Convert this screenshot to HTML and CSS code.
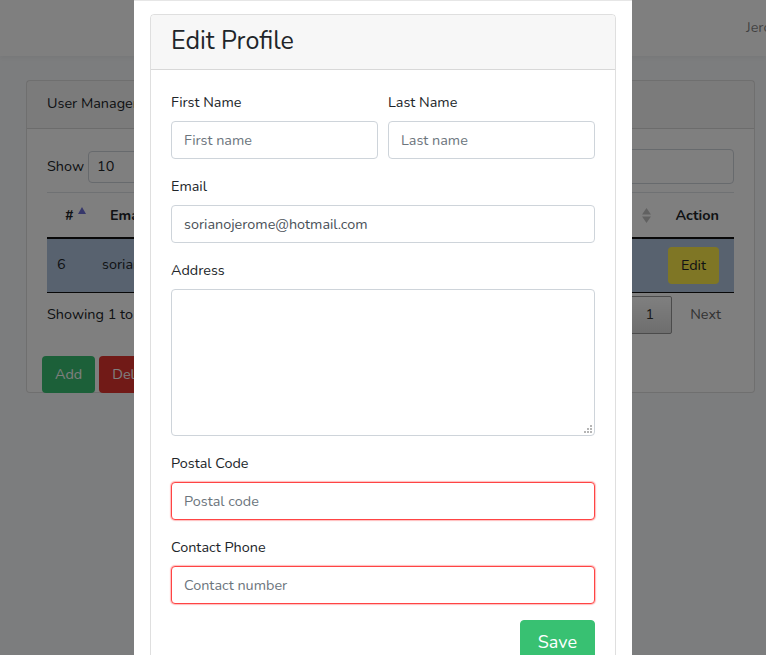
FILE: index.html
```html
<!DOCTYPE html>
<html lang="en">
<head>
<meta charset="utf-8">
<title>User Management</title>
<link rel="stylesheet" href="styles.css">
</head>
<body>
<nav class="navbar">
  <span class="nav-user">Jerome Soriano</span>
</nav>
<main class="main">
  <section class="card">
    <div class="card-header">User Management</div>
    <div class="card-body">
      <div class="tools">
        <label class="show">Show <span class="select">10</span> entries</label>
        <label class="search">Search: <span class="search-input"></span></label>
      </div>
      <table class="table">
        <thead>
          <tr>
            <th class="c-id">#<span class="sort-up"></span></th>
            <th class="c-email">Email</th>
            <th class="c-name">Name</th>
            <th class="c-sort">
              <svg class="sort-both" width="9" height="15" viewBox="0 0 9 15" aria-hidden="true">
                <polygon points="4.5,0 9,6.5 0,6.5" fill="#c2c2c2"/>
                <polygon points="0,8.5 9,8.5 4.5,15" fill="#c2c2c2"/>
              </svg>
            </th>
            <th class="c-action">Action</th>
          </tr>
        </thead>
        <tbody>
          <tr class="selected">
            <td class="c-id">6</td>
            <td class="c-email">sorianojerome@hotmail.com</td>
            <td class="c-name">Jerome Soriano</td>
            <td class="c-sort"></td>
            <td class="c-action"><span class="btn btn-warning">Edit</span></td>
          </tr>
        </tbody>
      </table>
      <div class="table-foot">
        <span class="info">Showing 1 to 1 of 1 entries</span>
        <div class="paging">
          <span class="page-link disabled">Previous</span>
          <span class="page-link current">1</span>
          <span class="page-link disabled">Next</span>
        </div>
      </div>
    </div>
    <div class="card-actions">
      <span class="btn btn-success">Add</span>
      <span class="btn btn-danger">Delete</span>
    </div>
  </section>
</main>

<div class="backdrop">
  <div class="modal">
    <div class="modal-body">
      <div class="ecard">
        <div class="ecard-header">Edit Profile</div>
        <form class="ecard-body">
          <div class="form-row">
            <div class="form-group">
              <label class="label">First Name</label>
              <input class="input" type="text" placeholder="First name">
            </div>
            <div class="form-group">
              <label class="label">Last Name</label>
              <input class="input" type="text" placeholder="Last name">
            </div>
          </div>
          <div class="form-group">
            <label class="label">Email</label>
            <input class="input" type="text" value="sorianojerome@hotmail.com">
          </div>
          <div class="form-group">
            <label class="label">Address</label>
            <div class="textarea-wrap">
              <textarea class="input textarea" rows="6"></textarea>
              <svg class="grip" width="9" height="9" viewBox="0 0 9 9" aria-hidden="true">
                <rect x="6" y="0" width="2" height="2" fill="#b5b5b5"/>
                <rect x="3" y="3" width="2" height="2" fill="#b5b5b5"/>
                <rect x="6" y="3" width="2" height="2" fill="#b5b5b5"/>
                <rect x="0" y="6" width="2" height="2" fill="#b5b5b5"/>
                <rect x="3" y="6" width="2" height="2" fill="#b5b5b5"/>
                <rect x="6" y="6" width="2" height="2" fill="#b5b5b5"/>
              </svg>
            </div>
          </div>
          <div class="form-group">
            <label class="label">Postal Code</label>
            <input class="input invalid" type="text" placeholder="Postal code">
          </div>
          <div class="form-group">
            <label class="label">Contact Phone</label>
            <input class="input invalid" type="text" placeholder="Contact number">
          </div>
          <div class="form-actions">
            <button class="save" type="button">Save</button>
          </div>
        </form>
      </div>
    </div>
  </div>
</div>
</body>
</html>
```

FILE: styles.css
```css
* { box-sizing: border-box; }
html, body { height: 100%; }
body {
  margin: 0;
  font-family: "Nunito", "Lato", "Open Sans", sans-serif;
  font-size: 14.4px;
  line-height: 1.5;
  color: #212529;
  background: #f8fafc;
  overflow: hidden;
}

/* ---------- background page ---------- */
.navbar {
  height: 56px;
  background: #fff;
  box-shadow: 0 2px 4px rgba(0,0,0,.04);
  display: flex;
  align-items: center;
  padding-left: 746px;
  white-space: nowrap;
  overflow: hidden;
}
.nav-user { color: rgba(0,0,0,.5); }

.main { padding: 24px 11px 0 26px; }

.card {
  background: #fff;
  border: 1px solid rgba(0,0,0,.125);
  border-radius: 4px;
}
.card-header {
  padding: 12px 20px;
  height: 48px;
  background: rgba(0,0,0,.03);
  border-bottom: 1px solid rgba(0,0,0,.125);
}
.card-body { padding: 20px 20px 0; }

.tools {
  display: flex;
  justify-content: space-between;
  align-items: center;
  height: 35px;
}
.show, .search { display: flex; align-items: center; gap: 4px; }
.select {
  display: inline-block;
  width: 62px;
  height: 32px;
  border: 1px solid #ced4da;
  border-radius: 4px;
  padding: 4px 8px;
}
.search-input {
  display: inline-block;
  width: 290px;
  height: 35px;
  border: 1px solid #ced4da;
  border-radius: 4px;
}

.table {
  width: 100%;
  border-collapse: collapse;
  margin-top: 8px;
}
.table th {
  text-align: left;
  font-weight: 700;
  height: 45px;
  padding: 2px 10px 0;
  border-top: 1px solid #dee2e6;
  border-bottom: 2px solid #111;
}
.table th.c-id { padding-left: 18px; width: 53px; }
.table td {
  height: 55px;
  padding: 0 10px;
  border-bottom: 1px solid #111;
}
.table td.c-email { padding-left: 2px; }
.selected td { background: #b0c4de; }
.table .c-action { width: 82px; text-align: right; padding-right: 15px; }
.table .c-sort { width: 40px; text-align: right; padding-right: 1px; }
.sort-up {
  display: inline-block;
  margin-left: 4px;
  vertical-align: 6px;
  border-left: 4px solid transparent;
  border-right: 4px solid transparent;
  border-bottom: 7px solid #6c6fd6;
}
.sort-both { display: inline-block; vertical-align: -3px; }

.btn {
  display: inline-block;
  padding: 6px 12px;
  border-radius: 4px;
  line-height: 23px;
  border: 1px solid transparent;
}
.btn-warning { background: #ffed4a; color: #212529; }
.btn-success { background: #38c172; color: #fff; }
.btn-danger { background: #e3342f; color: #fff; }

.table-foot {
  display: flex;
  justify-content: space-between;
  align-items: center;
  padding-top: 3px;
  padding-bottom: 2px;
}
.paging { display: flex; align-items: center; margin-right: -5px; }
.page-link {
  padding: 7px 17px;
  color: #333;
  border: 1px solid transparent;
  border-radius: 2px;
}
.page-link.disabled { color: #666; }
.page-link.current {
  border-color: #979797;
  background: linear-gradient(#fff, #dcdcdc);
}
.card-actions {
  display: flex;
  gap: 4px;
  padding: 20px 0 0 15px;
  margin-bottom: -1px;
}

/* ---------- modal ---------- */
.backdrop {
  position: fixed;
  inset: 0;
  background: rgba(0,0,0,.5);
  display: flex;
  justify-content: center;
}
.modal {
  width: 498px;
  background: #fff;
  border-top: 1px solid #e6e6e6;
  height: 700px;
}
.modal-body { padding: 13px 16px 16px; }
.ecard {
  border: 1px solid rgba(0,0,0,.125);
  border-radius: 4px;
}
.ecard-header {
  height: 55px;
  padding: 0 20px;
  display: flex;
  align-items: center;
  font-size: 25px;
  background: #f7f7f7;
  border-bottom: 1px solid rgba(0,0,0,.125);
  border-radius: 4px 4px 0 0;
}
.ecard-body { padding: 21px 20px 20px; }
.form-row { display: flex; gap: 10px; }
.form-row .form-group { flex: 1; }
.form-group { margin-bottom: 16px; }
.label { display: block; margin-bottom: 8px; line-height: 22px; }
.input {
  display: block;
  width: 100%;
  height: 38px;
  padding: 6px 12px;
  font: inherit;
  color: #495057;
  background: #fff;
  border: 1px solid #ced4da;
  border-radius: 4px;
  outline: none;
}
.input::placeholder { color: #6c757d; }
.textarea-wrap { position: relative; }
.textarea { height: 147px; resize: none; }
.grip { position: absolute; right: 2px; bottom: 2px; }
.invalid {
  border-color: #ff4444;
  box-shadow: 0 0 1px 1px rgba(255,90,90,.4);
}
.form-actions { display: flex; justify-content: flex-end; }
.save {
  font: inherit;
  font-size: 18px;
  padding: 8px 17px;
  color: #fff;
  background: #38c172;
  border: 1px solid #38c172;
  border-radius: 4px;
}
```
